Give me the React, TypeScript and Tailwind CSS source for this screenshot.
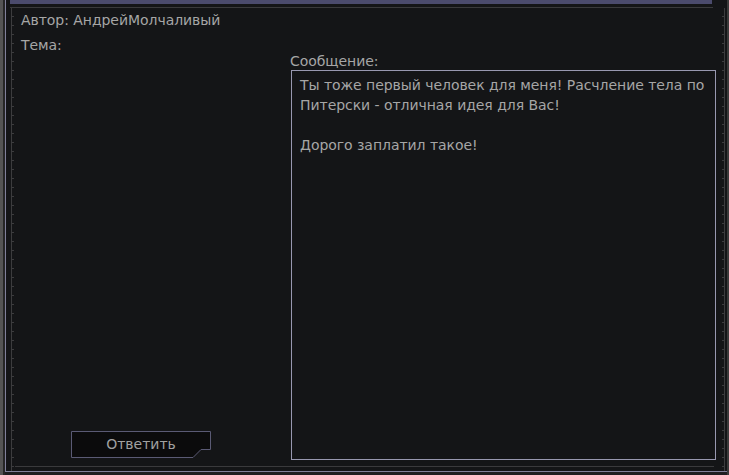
export default function App() {
    return (
        <div className="flex h-[475px] w-[729px] overflow-hidden bg-[#1e1e20] font-['DejaVu_Sans',sans-serif] text-[14px] tracking-[-0.05px] text-[#a6a6a6]">
            <div className="w-[3px] bg-[#545454]" />
            <div className="w-[2px] bg-[#262626]" />
            <div className="flex flex-1 flex-col pb-[3px]">
                <div className="flex flex-1 flex-col border-b border-l border-[#80809a] bg-[#141517]">
                    <div className="ml-[4px] mr-[15px] h-[4px] bg-[#4b4b6d]" />
                    <div className="h-[3px]" />
                    <div className="ml-[4px] mr-[14px] h-px bg-[#3a3a3c]" />
                    <div className="flex flex-1">
                        <div className="ml-[5px] w-[3px] border-l border-[#3c3c3e] bg-[repeating-linear-gradient(to_bottom,transparent_0_8px,#3c3c3e_8px_9px)]" />
                        <div className="flex flex-1 flex-col">
                            <div className="mt-[2px] h-[20px] pl-[7px] leading-[20px]">Автор: АндрейМолчаливый</div>
                            <div className="flex flex-1">
                                <div className="flex w-[277px] flex-col">
                                    <div className="mt-[5px] h-[20px] pl-[7px] leading-[20px]">Тема:</div>
                                    <div className="flex-1" />
                                    <button className="relative mb-[8px] ml-[57px] h-[27px] w-[140px] text-[14px] leading-[27px] tracking-normal text-[#a0a0a0]">
                                        <svg className="absolute inset-0" width="140" height="27" viewBox="0 0 140 27">
                                            <path d="M0.5 0.5 H139.5 V18.5 H130 L122 26.5 H0.5 Z" fill="#0b0b0c" stroke="#5a5a74" />
                                        </svg>
                                        <span className="relative">Ответить</span>
                                    </button>
                                </div>
                                <div className="mr-[6px] flex flex-1 flex-col">
                                    <div className="-ml-px mt-[22px] h-[18px] leading-[18px]">Сообщение:</div>
                                    <div className="mb-[6px] flex-1 border border-[#9898b0] px-[8px] py-[4px] leading-[20px]">
                                        Ты тоже первый человек для меня! Расчление тела по
                                        <br />
                                        Питерски - отличная идея для Вас!
                                        <br />
                                        <br />
                                        Дорого заплатил такое!
                                    </div>
                                </div>
                            </div>
                            <div className="ml-px mr-[8px] h-px bg-[#3a3a3c]" />
                            <div className="h-[4px]" />
                        </div>
                        <div className="w-[3px] border-r border-[#3c3c3e] bg-[repeating-linear-gradient(to_bottom,transparent_0_8px,#3c3c3e_8px_9px)]" />
                        <div className="w-[2px]" />
                    </div>
                </div>
            </div>
            <div className="w-[2px] bg-[#3a3a3a]" />
        </div>
    );
}
